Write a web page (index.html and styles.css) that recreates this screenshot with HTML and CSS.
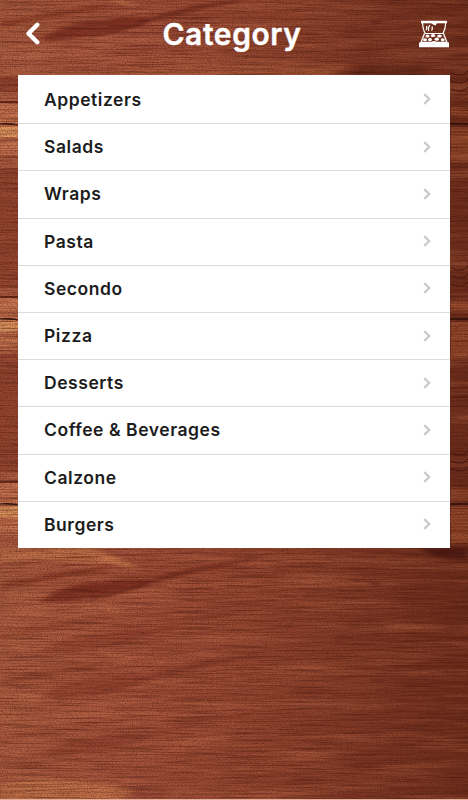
FILE: index.html
```html
<!DOCTYPE html>
<html lang="en">
<head>
    <meta charset="UTF-8">
    <meta name="viewport" content="width=device-width, initial-scale=1.0">
    <title>Category</title>
    <link rel="stylesheet" href="styles.css">
</head>
<body>

    <!-- Wood background -->
    <svg class="wood" width="468" height="800" viewBox="0 0 468 800" aria-hidden="true">
        <defs>
            <linearGradient id="base" x1="0" x2="1" y1="0" y2="0">
                <stop offset="0" stop-color="#ab5e42"/>
                <stop offset=".3" stop-color="#a2523b"/>
                <stop offset=".6" stop-color="#90452f"/>
                <stop offset="1" stop-color="#6c2e1c"/>
            </linearGradient>
            <filter id="grain" x="0" y="0" width="100%" height="100%" color-interpolation-filters="sRGB">
                <feTurbulence type="fractalNoise" baseFrequency=".018 .75" numOctaves="4" seed="7"/>
                <feColorMatrix values="0 0 0 0 .25  0 0 0 0 .06  0 0 0 0 .03  2.2 0 0 0 -.9"/>
            </filter>
            <filter id="light" x="0" y="0" width="100%" height="100%" color-interpolation-filters="sRGB">
                <feTurbulence type="fractalNoise" baseFrequency=".008 .09" numOctaves="5" seed="21"/>
                <feColorMatrix values="0 0 0 0 .86  0 0 0 0 .52  0 0 0 0 .36  0 1.6 0 0 -.72"/>
            </filter>
            <filter id="speck" x="0" y="0" width="100%" height="100%" color-interpolation-filters="sRGB">
                <feTurbulence type="fractalNoise" baseFrequency=".8" numOctaves="2" seed="3"/>
                <feColorMatrix values="0 0 0 0 .3  0 0 0 0 .08  0 0 0 0 .05  0 0 2 0 -.85"/>
            </filter>
            <filter id="soft" x="-20%" y="-60%" width="140%" height="220%">
                <feGaussianBlur stdDeviation="3 1.2"/>
            </filter>
            <g id="streak" filter="url(#soft)">
                <path d="M40 62Q60 44 105 42Q130 36 150 40L140 48Q112 54 90 58Q60 64 40 62Z" fill="#6a2016" opacity=".6"/>
                <path d="M90 59Q120 54 146 44" fill="none" stroke="#42120c"/>
                <path d="M140 43Q190 25 258 18L252 21Q190 32 144 46Z" fill="#632015" opacity=".6"/>
                <path d="M0 44Q70 30 118 24L88 34Q50 39 0 50Z" fill="#752a1c" opacity=".5"/>
                <path d="M95 10Q120 17 138 29Q108 27 95 10Z" fill="#d98a55" opacity=".4"/>
                <path d="M0 73Q70 70 150 58L190 60Q80 78 0 84Z" fill="#b8694a" opacity=".4"/>
                <ellipse cx="376" cy="44" rx="3" ry="1.200" fill="#3c0f0c"/>
            </g>
            <g id="edges">
                <path d="M0 0H18V52H0Z" fill="#dc895f" opacity=".55"/>
                <path d="M0 -1H18" stroke="#6a2a1c" stroke-width="2"/>
                <path d="M0 15H18M0 38H18M0 50H18" stroke="#6a2a1c" opacity=".5"/>
                <path d="M0 21Q9 20 18 22" stroke="#29180f" stroke-width="1.200"/>
                <path d="M0 24H18V34H0Z" fill="#f0ae6c" opacity=".65"/>
                <path d="M451 -30Q463 -25 468 -32M451 -22Q463 -17 468 -24M451 -14Q462 -9 468 -16M451 5H468" stroke="#330d09" fill="none" opacity=".7"/>
                <path d="M451 4H468V12H451ZM451 24H468V60H451Z" fill="#b45f38" opacity=".5"/>
                <path d="M450 21H468" stroke="#240c08" stroke-width="1.500"/>
            </g>
        </defs>
        <rect width="468" height="800" fill="url(#base)"/>
        <rect width="468" height="800" filter="url(#light)" opacity=".5"/>
        <use href="#streak" y="-22"/>
        <use href="#streak" y="540"/>
        <use href="#streak" y="590" opacity=".4"/>
        <use href="#streak" y="636" opacity=".5"/>
        <use href="#streak" y="694" opacity=".35"/>
        <path d="M0 786Q60 770 135 790L120 800H0Z" fill="#dc8d57" opacity=".5" filter="url(#soft)"/>
        <path d="M0 548H90L140 568Q60 555 0 562Z" fill="#dc8d57" opacity=".45" filter="url(#soft)"/>
        <path d="M120 64H350L330 76H110Z" fill="#bd6c45" opacity=".4" filter="url(#soft)"/>
        <path d="M360 65H425V76H350Z" fill="#42130c" opacity=".35" filter="url(#soft)"/>
        <path d="M420 548H468V558Q440 562 420 548Z" fill="#36100b" opacity=".6" filter="url(#soft)"/>
        <path d="M0 168H18V288H0ZM0 354H18V472H0ZM0 76H18V92H0Z" fill="#7a2c1d" opacity=".45"/>
        <use href="#edges" y="103"/>
        <use href="#edges" y="298"/>
        <use href="#edges" y="483"/>
        <rect width="468" height="800" filter="url(#grain)" opacity=".5"/>
        <rect width="468" height="800" filter="url(#speck)" opacity=".5"/>
        <path d="M0 799.5H468" stroke="#e2b09c"/>
    </svg>

    <!-- Header with Title -->
    <header>
        <a href="#" class="back" aria-label="Back">
            <svg width="16" height="24" viewBox="0 0 16 24">
                <path d="M12.300 2.800L3.500 11.500L12.300 20.200" fill="none" stroke="#fff" stroke-width="4.400" stroke-linecap="round" stroke-linejoin="round"/>
            </svg>
        </a>
        <h1>Category</h1>
        <a href="#" class="box" aria-label="Order">
            <svg width="30" height="28" viewBox="0 0 30 28">
                <path d="M2 .8H28V3.300H2Z" fill="#fff"/>
                <path d="M3.500 3Q4 10 6.300 13.500H24Q26.500 9 26.700 3" fill="none" stroke="#fff" stroke-width="1.200"/>
                <path d="M12 3H18L16.500 5.500L14 4.500Z" fill="#fff"/>
                <path d="M7 10Q8.500 8 7.500 6M9.500 11V7.500L11 5M12.500 10.500Q14 9 13 6.500" fill="none" stroke="#fff" stroke-width="1.300"/>
                <path d="M5.500 13.500L2 22.500H28L24.500 13.500" fill="none" stroke="#fff" stroke-width="1.300"/>
                <path d="M0 22.500H12.500L15 24.500L17.500 22.500H30V27.200H0Z" fill="#fff"/>
                <g fill="#fff">
                    <ellipse cx="8.500" cy="16" rx="2" ry="1.500"/>
                    <ellipse cx="14" cy="15.500" rx="2.200" ry="1.500"/>
                    <ellipse cx="20.500" cy="16" rx="2.300" ry="1.600"/>
                    <ellipse cx="6" cy="19.700" rx="2" ry="1.500"/>
                    <ellipse cx="11" cy="19.700" rx="2" ry="1.600"/>
                    <ellipse cx="17.800" cy="19.200" rx="2.200" ry="1.600"/>
                    <ellipse cx="23.700" cy="19.800" rx="2" ry="1.600"/>
                    <ellipse cx="15" cy="22.600" rx="2.300" ry="1.500"/>
                </g>
            </svg>
        </a>
    </header>

    <svg class="symbols" aria-hidden="true">
        <symbol id="arrow" viewBox="0 0 8 12">
            <path d="M1.200 1.200L6.200 6L1.200 10.800" fill="none" stroke="#cacaca" stroke-width="2.300"/>
        </symbol>
    </svg>

    <!-- Category List -->
    <nav class="list">
        <a href="#"><span>Appetizers</span><svg class="arrow"><use href="#arrow"/></svg></a>
        <a href="#"><span>Salads</span><svg class="arrow"><use href="#arrow"/></svg></a>
        <a href="#"><span>Wraps</span><svg class="arrow"><use href="#arrow"/></svg></a>
        <a href="#"><span>Pasta</span><svg class="arrow"><use href="#arrow"/></svg></a>
        <a href="#"><span>Secondo</span><svg class="arrow"><use href="#arrow"/></svg></a>
        <a href="#"><span>Pizza</span><svg class="arrow"><use href="#arrow"/></svg></a>
        <a href="#"><span>Desserts</span><svg class="arrow"><use href="#arrow"/></svg></a>
        <a href="#"><span>Coffee &amp; Beverages</span><svg class="arrow"><use href="#arrow"/></svg></a>
        <a href="#"><span>Calzone</span><svg class="arrow"><use href="#arrow"/></svg></a>
        <a href="#"><span>Burgers</span><svg class="arrow"><use href="#arrow"/></svg></a>
    </nav>

</body>
</html>
```
FILE: styles.css
```css
/* Reset CSS */
* {
    margin: 0;
    padding: 0;
    box-sizing: border-box;
    font-family: "Arial Rounded MT Bold", Inter, "Liberation Sans", sans-serif;
}

body {
    height: 800px;
    overflow: hidden;
    background: #85402c;
}

/* Background behind everything */
.wood {
    position: absolute;
    top: 0;
    left: 0;
    z-index: -1;
}

.symbols {
    display: none;
}

/* Header */
header {
    display: flex;
    justify-content: space-between;
    align-items: center;
    height: 75px;
    padding: 0 19px 7px 25px;
}

.back {
    display: flex;
    width: 20px;
}

.box {
    display: flex;
    width: 30px;
}

h1 {
    color: #fff;
    font-size: 30px;
    font-weight: 600;
    line-height: 36px;
    letter-spacing: 0.6px;
    -webkit-text-stroke: 0.4px #fff;
}

/* Category List */
.list {
    display: grid;
    grid-template-rows: repeat(10, 1fr);
    height: 473px;
    margin: 0 18px;
    padding-top: 1px;
    background: #fff;
}

.list a {
    display: flex;
    justify-content: space-between;
    align-items: center;
    padding: 0 19px 1px 26px;
    border-top: 1px solid #dcdcdc;
    color: #1c1c1c;
    font-size: 17.5px;
    font-weight: 600;
    letter-spacing: 0.55px;
    text-decoration: none;
}

.list a:first-child {
    border-top: none;
}

.arrow {
    width: 8px;
    height: 12px;
}
```
